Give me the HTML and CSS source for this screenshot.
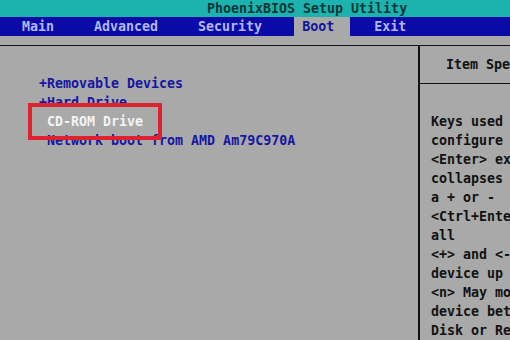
FILE: index.html
```html
<!DOCTYPE html>
<html>
<head>
<meta charset="utf-8">
<link rel="stylesheet" href="styles.css">
</head>
<body>
<div class="screen">
  <div class="title">PhoenixBIOS Setup Utility</div>
  <div class="menu">
    <span class="tab">Main</span>
    <span class="tab">Advanced</span>
    <span class="tab">Security</span>
    <span class="tab active">Boot</span>
    <span class="tab">Exit</span>
  </div>
  <div class="main">
    <div class="left">
      <div class="row">+Removable Devices</div>
      <div class="row">+Hard Drive</div>
      <div class="row sel"><span class="mark"> CD-ROM Drive</span></div>
      <div class="row"> Network boot from AMD Am79C970A</div>
    </div>
    <div class="right">
      <div class="help-head">Item Specific Help</div>
      <div class="help">
        <div class="row">Keys used to view or</div>
        <div class="row">configure devices:</div>
        <div class="row">&lt;Enter&gt; expands or</div>
        <div class="row">collapses devices with</div>
        <div class="row">a + or -</div>
        <div class="row">&lt;Ctrl+Enter&gt; expands</div>
        <div class="row">all</div>
        <div class="row">&lt;+&gt; and &lt;-&gt; moves the</div>
        <div class="row">device up or down.</div>
        <div class="row">&lt;n&gt; May move removable</div>
        <div class="row">device between Hard</div>
        <div class="row">Disk or Removable Disk</div>
      </div>
    </div>
  </div>
</div>
</body>
</html>
```
FILE: styles.css
```css
html, body {
  margin: 0;
  padding: 0;
  background: #a9a9a9;
}
.screen {
  width: 510px;
  height: 340px;
  overflow: hidden;
  font-family: "DejaVu Sans Mono", "Liberation Mono", monospace;
  font-size: 13.3px;
  font-weight: bold;
  white-space: nowrap;
}
.title {
  height: 17px;
  line-height: 17px;
  background: #1cb2ad;
  color: #0c3836;
  padding-left: 207px;
}
.menu {
  height: 19px;
  line-height: 19px;
  background: #0a0aa6;
  display: flex;
  gap: 24px;
  padding-left: 14px;
}
.tab {
  padding: 0 8px;
  color: #b6b6f2;
}
.tab.active {
  background: #a9a9a9;
  color: #15159a;
  padding-right: 16px;
  margin-right: -8px;
}
.main {
  margin-top: 9px;
  border-top: 1px solid #111;
  display: flex;
  height: 300px;
}
.row {
  height: 19px;
  line-height: 19px;
  white-space: pre;
}
.left {
  width: 420px;
  flex: none;
  border-right: 2px solid #111;
  padding-top: 28px;
  padding-left: 39px;
  box-sizing: border-box;
  color: #1616a0;
}
.sel {
  color: #f4f4f4;
}
.mark {
  position: relative;
}
.mark::before {
  content: "";
  position: absolute;
  left: -11px;
  top: -11px;
  width: 126px;
  height: 29px;
  border: 4px solid #de2230;
}
.right {
  flex: 1;
  min-width: 0;
  overflow: hidden;
  color: #111;
}
.help-head {
  height: 19px;
  line-height: 19px;
  padding-top: 9px;
  padding-bottom: 9px;
  padding-left: 26px;
  border-bottom: 1px solid #111;
}
.help {
  padding-top: 28px;
  padding-left: 11px;
}
```
